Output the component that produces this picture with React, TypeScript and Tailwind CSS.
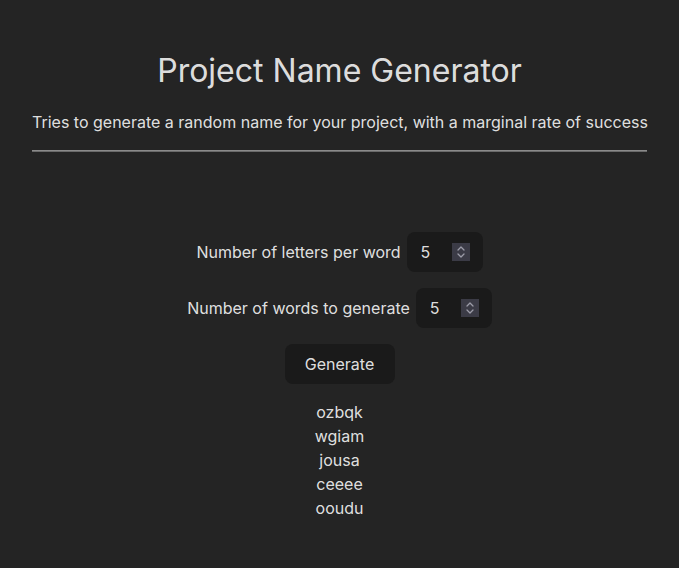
import React from "react";

function NumberBox() {
  return (
    <div className="flex h-10 w-[76px] items-center rounded-lg border border-transparent bg-[#1a1a1a]">
      <input
        type="number"
        defaultValue={5}
        className="w-0 min-w-0 flex-1 bg-transparent pl-[13px] text-base text-[rgba(255,255,255,0.87)] outline-none [appearance:textfield] [&::-webkit-inner-spin-button]:appearance-none [&::-webkit-outer-spin-button]:appearance-none"
      />
      <div className="mr-[12px] flex h-[18px] w-[18px] items-center justify-center bg-[#3b3b46]">
        <svg width="10" height="14" viewBox="0 0 10 14" fill="none" stroke="#9c9ca8" strokeWidth="1.3" strokeLinecap="round" strokeLinejoin="round">
          <path d="M2 5 L5 2 L8 5" />
          <path d="M2 9 L5 12 L8 9" />
        </svg>
      </div>
    </div>
  );
}

export default function App() {
  const list = ["ozbqk", "wgiam", "jousa", "ceeee", "ooudu"];
  return (
    <div
      className="min-h-[568px] bg-[#242424] text-[rgba(255,255,255,0.87)] [color-scheme:dark]"
      style={{ fontFamily: "Inter, 'Noto Sans', sans-serif" }}
    >
      <div className="px-8 pt-8 text-center">
        <h1 className="mt-[21.44px] mb-[21.44px] text-[32px] leading-[1.1] font-normal">
          Project Name Generator
        </h1>
        <p className="my-4 whitespace-nowrap text-base leading-6">
          Tries to generate a random name for your project, with a marginal rate of success
        </p>
        <hr className="h-0 border-0 border-t border-t-[#8a8a8a] border-b border-b-[#6a6a6a]" />
        <div className="mt-[80px] flex flex-col items-center gap-4">
          <div className="flex items-center gap-[6px]">
            <label className="text-base leading-6">Number of letters per word</label>
            <NumberBox />
          </div>
          <div className="flex items-center gap-[6px]">
            <label className="text-base leading-6">Number of words to generate</label>
            <NumberBox />
          </div>
          <button className="h-10 w-[110px] rounded-lg border border-transparent bg-[#1a1a1a] text-base text-[rgba(255,255,255,0.87)]">
            Generate
          </button>
          <div className="flex flex-col items-center">
            {list.map((w) => (
              <div key={w} className="text-base leading-6">
                {w}
              </div>
            ))}
          </div>
        </div>
      </div>
    </div>
  );
}
